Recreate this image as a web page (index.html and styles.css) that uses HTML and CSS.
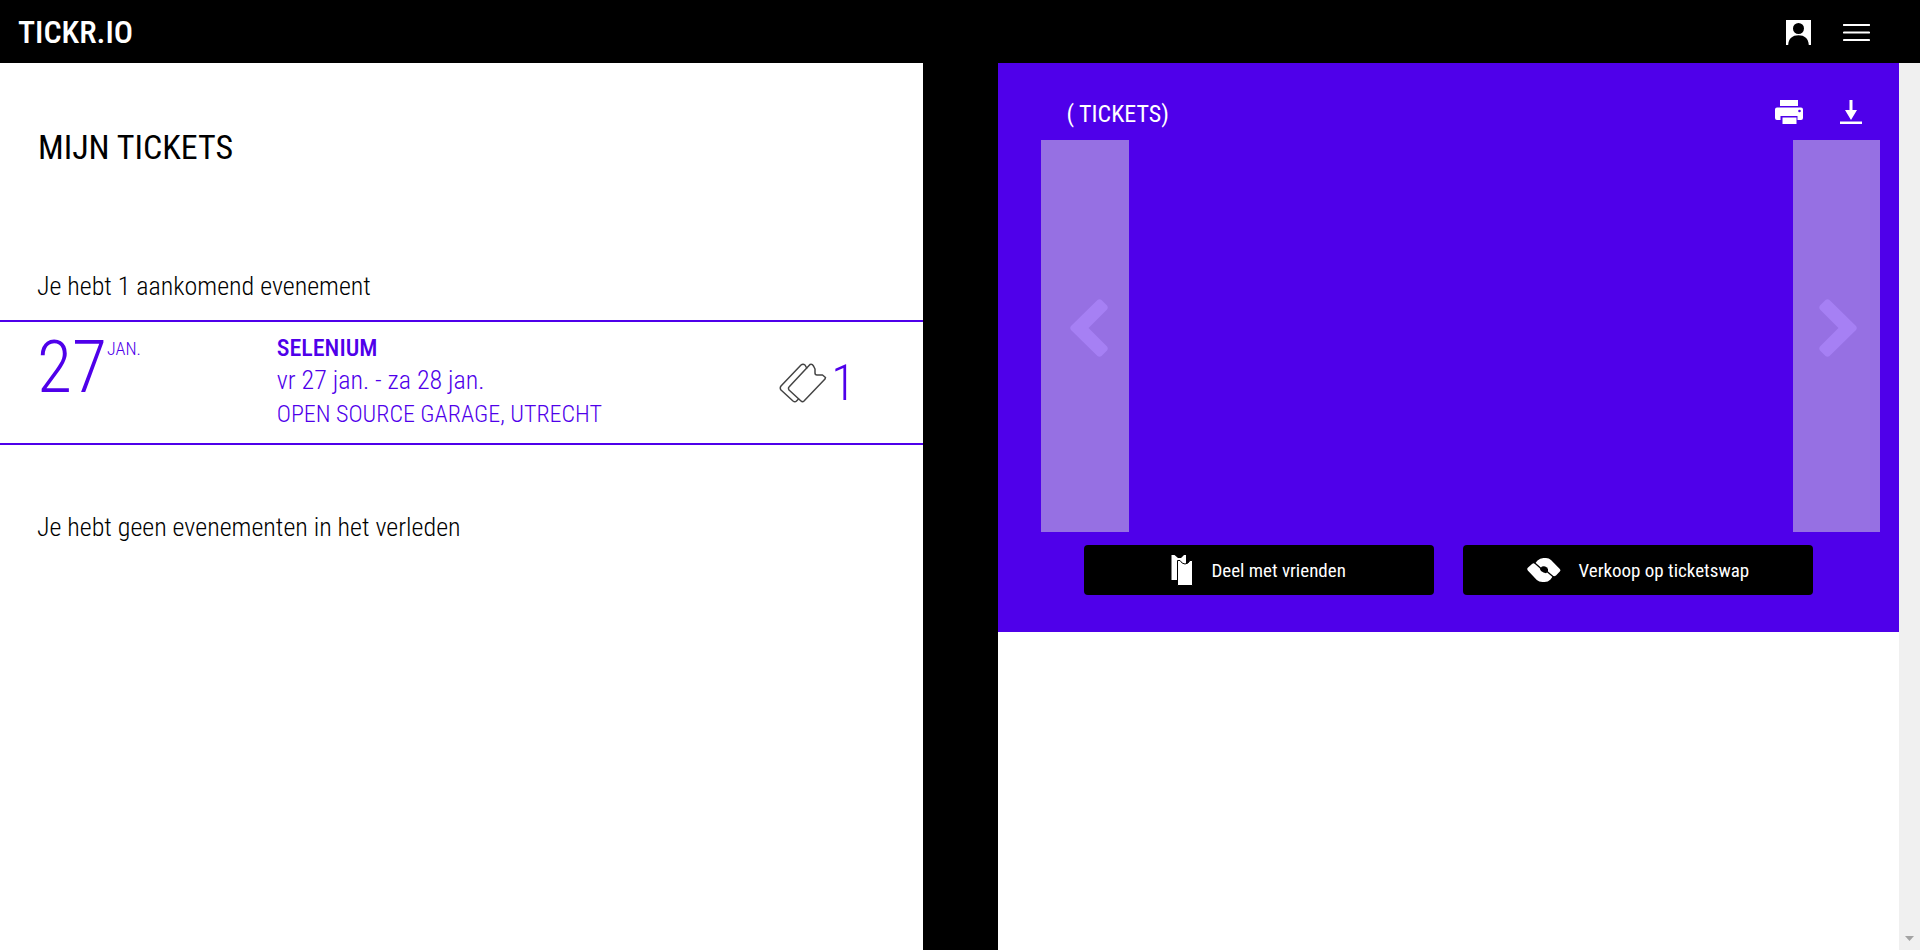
FILE: index.html
```html
<!DOCTYPE html>
<html lang="nl">
<head>
<meta charset="utf-8">
<title>TICKR.IO</title>
<link rel="stylesheet" href="styles.css">
</head>
<body>
<header class="topbar">
  <a class="logo" href="#">TICKR.IO</a>
  <nav class="topnav">
    <button class="icon-btn" type="button" aria-label="Account">
      <svg width="25" height="25" viewBox="0 0 25 25"><path fill="#fff" d="M0 0h25v25h-2.200C22.500 18.500 18.600 15.200 12.500 15.200S2.500 18.500 2.200 25H0z"/><circle cx="12.500" cy="8.500" r="5.500" fill="#000"/></svg>
    </button>
    <button class="icon-btn" type="button" aria-label="Menu">
      <svg width="27" height="17" viewBox="0 0 27 17"><path d="M1 1h25M1 8.500h25M1 16h25" stroke="#fff" stroke-width="2.200" stroke-linecap="round"/></svg>
    </button>
  </nav>
</header>
<div class="panes">
  <main class="pane events">
    <h1 class="title">MIJN TICKETS</h1>
    <p class="note">Je hebt 1 aankomend evenement</p>
    <a class="event" href="#">
      <span class="date"><span class="day">27</span><span class="month">JAN.</span></span>
      <span class="info">
        <strong class="name">SELENIUM</strong>
        <span>vr 27 jan. - za 28 jan.</span>
        <span class="place">OPEN SOURCE GARAGE, UTRECHT</span>
      </span>
      <span class="count">
        <svg width="48" height="40" viewBox="0 0 48 40" fill="none" stroke="#444" stroke-width="1.500" stroke-linejoin="round"><path d="M28 5.500 26 2Q24 .5 22 2L2 23Q.500 25 2 27L14 38Q16 39.500 17.500 38L20 35.500"/><path d="M31 1.500Q33 .5 34.500 3L36 6V10Q36 12 38 12H43.500L46.500 14.500 46 16 25 38Q23.500 39.500 22 38L10 27Q9 25 10 24Z"/></svg>
        <span class="amount">1</span>
      </span>
    </a>
    <p class="note past">Je hebt geen evenementen in het verleden</p>
  </main>
  <section class="pane detail">
    <div class="detail-main">
      <div class="viewer">
        <div class="viewer-head">
          <h2 class="viewer-title">( TICKETS)</h2>
          <div class="tools">
            <button class="icon-btn" type="button" aria-label="Printen">
              <svg width="28" height="24" viewBox="0 0 28 24"><path fill="#fff" d="M5 0h18v6H5zM2 7.500h24q2 0 2 2V18q0 2-2 2h-3.500v-4h-17v4H2q-2 0-2-2V9.500q0-2 2-2zM7.500 17.500h14V24h-14z"/><circle cx="24.500" cy="11" r="1.300" fill="#4f00ea"/></svg>
            </button>
            <button class="icon-btn" type="button" aria-label="Downloaden">
              <svg width="22" height="24" viewBox="0 0 22 24"><path fill="#fff" d="M9.500 0h3v10H17l-6 10L5 10h4.500zM0 21.500h22V24H0z"/></svg>
            </button>
          </div>
        </div>
        <div class="slider">
          <button class="slide-btn" type="button" aria-label="Vorige">
            <svg width="38" height="58" viewBox="0 0 38 58"><path fill="#a680f4" d="M1 27 27.500 1q2-1.500 4 0L37 6.500q1.500 2 0 4L18.500 29 37 47.500q1.500 2 0 4L31.500 57q-2 1.500-4 0L1 31q-1.500-2 0-4z"/></svg>
          </button>
          <button class="slide-btn next" type="button" aria-label="Volgende">
            <svg width="38" height="58" viewBox="0 0 38 58"><path fill="#a680f4" d="M37 27 10.500 1q-2-1.500-4 0L1 6.500q-1.500 2 0 4L19.500 29 1 47.500q-1.500 2 0 4L6.500 57q2 1.500 4 0L37 31q1.500-2 0-4z"/></svg>
          </button>
        </div>
        <div class="actions">
          <button class="action" type="button">
            <svg width="22" height="32" viewBox="0 0 22 32"><path fill="#fff" d="M.500 1h3l3.500 3h3l3-3h2v9H6.500v16H.500z"/><path fill="#fff" stroke="#000" d="M6.500 6.500h2.500q2 3.500 5 3.500t5-3.500h2.500V31.500H6.500z"/></svg>
            Deel met vrienden
          </button>
          <button class="action" type="button">
            <svg width="34" height="24" viewBox="0 0 34 24"><path fill="#fff" d="M.8 9.800 5 6Q6.500 4.800 8 5.500L10.500 2.500Q13 0 16.500 0H19Q22 0 24 2l8.800 9q1.200 1.400 0 2.600L29 17.500Q27.500 18.500 26 18L23.500 21.500Q21 24 17.500 24H15.500Q12 24 9.800 22L.8 12.500Q-.3 11 .8 9.800z"/><path d="M7.500 4.800 14 10.500M20 13.500 26.500 19" stroke="#000" stroke-width="1.300"/><path fill="#000" d="M12.800 10.800 15 8.500Q17.500 7.500 19.500 9.200L21 11V13.500L19 15.200 16.500 14.500 14 13z"/></svg>
            Verkoop op ticketswap
          </button>
        </div>
      </div>
    </div>
    <div class="scroll-track"><svg width="9" height="5" viewBox="0 0 9 5"><path fill="#a3a3a3" d="M0 0h9L4.500 5z"/></svg></div>
  </section>
</div>
</body>
</html>
```
FILE: styles.css
```css
* { box-sizing: border-box; }
body {
  margin: 0;
  min-height: 100vh;
  display: flex;
  flex-direction: column;
  background: #000;
  color: #000;
  font-family: "Roboto Condensed", "Arial Narrow", Roboto, sans-serif;
  font-size: 26px;
  font-weight: 300;
}
button { font: inherit; color: inherit; border: 0; padding: 0; cursor: pointer; }
a { color: inherit; text-decoration: none; }
svg { display: block; flex: none; }
h1, h2, p { margin: 0; }
.icon-btn { background: none; }

.topbar {
  display: flex;
  justify-content: space-between;
  align-items: center;
  height: 63px;
  padding: 0 50px 0 18px;
  color: #fff;
}
.logo { font-size: 32px; font-weight: 500; line-height: 40px; }
.topnav { display: flex; align-items: center; gap: 32px; padding-top: 2px; }

.panes {
  flex: 1;
  display: grid;
  grid-template-columns: minmax(0, 1fr) minmax(0, 1fr);
  column-gap: 75px;
}
.pane { background: #fff; }

.events { padding-top: 61px; }
.title { padding-left: 38px; font-size: 34px; font-weight: 400; line-height: 46px; }
.note { padding-left: 37px; line-height: 32px; }
.title + .note { margin-top: 100px; }
.past { margin-top: 66px; }
.event {
  display: grid;
  grid-template-columns: 30% 1fr auto;
  margin-top: 18px;
  height: 125px;
  border: solid #4f00ea;
  border-width: 2px 0;
  color: #4f00ea;
}
.date { display: flex; padding-left: 37px; }
.day { font-size: 72px; line-height: 92px; }
.month { font-size: 18px; line-height: 54px; }
.info { display: flex; flex-direction: column; padding-top: 10px; line-height: 32px; }
.name { font-size: 24px; font-weight: 500; }
.place { padding-top: 2px; font-size: 24px; }
.count { display: flex; align-items: center; gap: 4px; padding-right: 67px; }
.amount { font-size: 50px; line-height: 60px; }

.detail { display: flex; }
.detail-main { flex: 1; }
.viewer { padding: 29px 19px 37px 43px; background: #4f00ea; color: #fff; }
.viewer-head { display: flex; justify-content: space-between; padding: 0 18px 0 26px; height: 48px; }
.viewer-title { font-size: 24px; font-weight: 400; line-height: 44px; }
.tools { display: flex; align-items: center; gap: 37px; height: 40px; }
.slider { display: flex; justify-content: space-between; height: 392px; }
.slide-btn {
  display: flex;
  justify-content: center;
  width: 88px;
  padding: 159px 0 0 8px;
  background: #9670e3;
}
.next { width: 87px; padding-left: 3px; }
.actions { display: flex; gap: 29px; padding: 13px 67px 0 43px; }
.action {
  flex: 1;
  display: flex;
  align-items: center;
  justify-content: center;
  gap: 18px;
  height: 50px;
  border-radius: 4px;
  background: #000;
  font-size: 19px;
  font-weight: 400;
}
.scroll-track {
  display: flex;
  align-items: flex-end;
  justify-content: center;
  width: 21px;
  padding-bottom: 9px;
  background: #f0f0f0;
}
```
